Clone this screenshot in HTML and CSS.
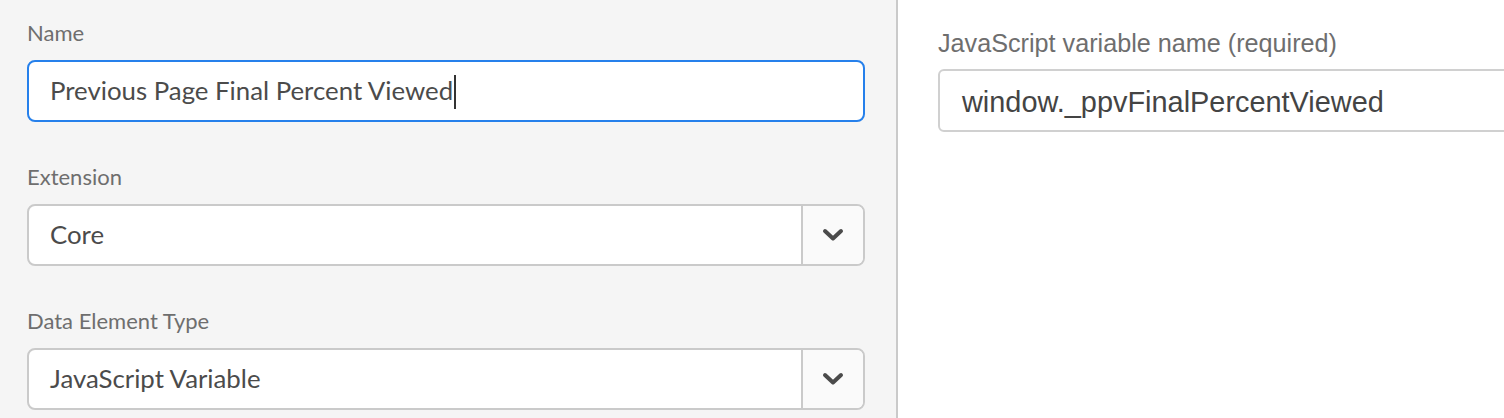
FILE: index.html
```html
<!DOCTYPE html>
<html lang="en">
<head>
<meta charset="utf-8">
<title>Data Element</title>
<link rel="stylesheet" href="styles.css">
</head>
<body>
<div class="page">
  <section class="left">
    <div class="field">
      <div class="label">Name</div>
      <div class="textfield focused"><span class="value">Previous Page Final Percent Viewed</span><span class="caret"></span></div>
    </div>
    <div class="field">
      <div class="label">Extension</div>
      <div class="picker">
        <div class="picker-value">Core</div>
        <div class="picker-btn">
          <svg width="22" height="14" viewBox="0 0 22 14"><path d="M3 3 L11 10.5 L19 3" fill="none" stroke="#4b4b4b" stroke-width="4" stroke-linecap="round" stroke-linejoin="round"/></svg>
        </div>
      </div>
    </div>
    <div class="field">
      <div class="label">Data Element Type</div>
      <div class="picker">
        <div class="picker-value">JavaScript Variable</div>
        <div class="picker-btn">
          <svg width="22" height="14" viewBox="0 0 22 14"><path d="M3 3 L11 10.5 L19 3" fill="none" stroke="#4b4b4b" stroke-width="4" stroke-linecap="round" stroke-linejoin="round"/></svg>
        </div>
      </div>
    </div>
  </section>
  <section class="right">
    <div class="r-label">JavaScript variable name (required)</div>
    <div class="r-input">window._ppvFinalPercentViewed</div>
  </section>
</div>
</body>
</html>
```
FILE: styles.css
```css
html, body {
  margin: 0;
  padding: 0;
  background: #ffffff;
}
.page {
  display: flex;
  height: 418px;
  overflow: hidden;
}
.left {
  width: 838px;
  flex: none;
  background: #f5f5f5;
  border-right: 2px solid #cacaca;
  padding: 18px 31px 0 27px;
  font-family: Lato, "Open Sans", sans-serif;
}
.field {
  margin-bottom: 40px;
}
.label {
  font-size: 22px;
  line-height: 30px;
  color: #6e6e6e;
  margin-bottom: 12px;
}
.textfield {
  box-sizing: border-box;
  height: 62px;
  background: #ffffff;
  border: 2px solid #cacaca;
  border-radius: 8px;
  display: flex;
  align-items: center;
  padding: 0 0 2px 21px;
  font-size: 25.8px;
  color: #4b4b4b;
}
.textfield.focused {
  border-color: #2680eb;
}
.caret {
  display: inline-block;
  width: 2px;
  height: 34px;
  background: #333333;
  margin-left: 1px;
  margin-top: 4px;
}
.picker {
  box-sizing: border-box;
  height: 62px;
  display: flex;
  border: 2px solid #cacaca;
  border-radius: 8px;
  overflow: hidden;
  background: #ffffff;
}
.picker-value {
  flex: 1;
  display: flex;
  align-items: center;
  padding: 0 0 2px 21px;
  font-size: 25.8px;
  color: #4b4b4b;
}
.picker-btn {
  width: 60px;
  flex: none;
  background: #fafafa;
  border-left: 2px solid #cacaca;
  display: flex;
  align-items: center;
  justify-content: center;
}
.right {
  flex: 1;
  padding: 29px 0 0 40px;
  font-family: "Liberation Sans", Arial, sans-serif;
  overflow: hidden;
}
.r-label {
  font-size: 25.2px;
  line-height: 29px;
  color: #6e6e6e;
  margin-bottom: 11px;
}
.r-input {
  box-sizing: border-box;
  width: 700px;
  height: 63px;
  border: 2px solid #d0d0d0;
  border-radius: 6px;
  display: flex;
  align-items: center;
  padding: 4px 0 0 22px;
  font-size: 28.9px;
  color: #444444;
}
```
